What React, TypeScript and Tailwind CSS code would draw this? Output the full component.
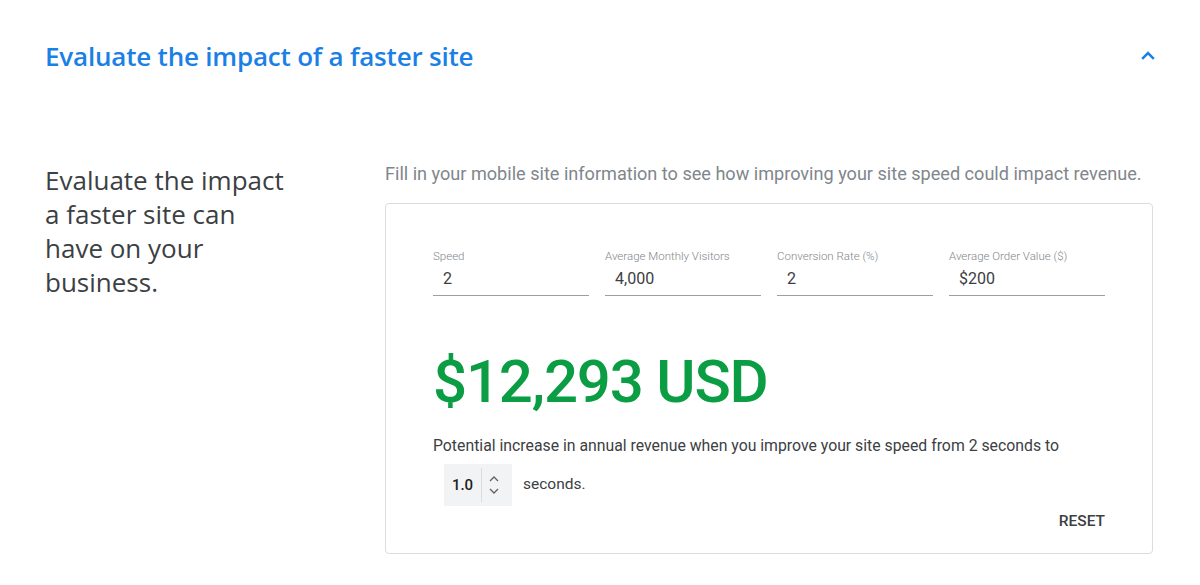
import React from 'react';

const fields = [
  { label: 'Speed', value: '2' },
  { label: 'Average Monthly Visitors', value: '4,000' },
  { label: 'Conversion Rate (%)', value: '2' },
  { label: 'Average Order Value ($)', value: '$200' },
];

const App = () => {
  return (
    <div className="w-[1200px] h-[585px] bg-white overflow-hidden font-['Open_Sans',sans-serif]">
      <header className="flex items-center justify-between h-[112px] pl-[45px] pr-[42px]">
        <h2 className="text-[26px] tracking-[-0.2px] text-[#1a80e6] font-semibold">
          Evaluate the impact of a faster site
        </h2>
        <svg width="20" height="20" viewBox="0 0 24 24" fill="none">
          <path d="M5 15.5 12 8.5l7 7" stroke="#1a80e6" strokeWidth="3" />
        </svg>
      </header>

      <div className="flex pt-[50px] pl-[45px]">
        <p className="w-[340px] text-[26px] leading-[34px] text-[#3c4043] pt-[1px]">
          Evaluate the impact
          <br />a faster site can
          <br />
          have on your
          <br />
          business.
        </p>

        <div className="w-[768px]">
          <p className="text-[18.1px] text-[#80868b] font-['Roboto',sans-serif] leading-[24px]">
            Fill in your mobile site information to see how improving your site speed could impact revenue.
          </p>

          <div className="mt-[17px] h-[351px] border border-[#dadce0] rounded-[4px] px-[47px] pt-[45px] font-['Roboto',sans-serif]">
            <div className="grid grid-cols-4 gap-4">
              {fields.map((f) => (
                <div key={f.label} className="border-b border-[#9e9e9e]">
                  <div className="text-[11.5px] font-light text-[#80868b] leading-[14px]">{f.label}</div>
                  <div className="text-[16px] text-[#3c4043] leading-[20px] pl-[10px] pt-[6px] pb-[6px]">
                    {f.value}
                  </div>
                </div>
              ))}
            </div>

            <div className="mt-[48px] text-[60px] leading-[76px] font-medium text-[#0b9d43] tracking-[-1.2px]">
              $12,293 USD
            </div>

            <p className="mt-[16px] text-[15.8px] text-[#3c4043] leading-[20px]">
              Potential increase in annual revenue when you improve your site speed from 2 seconds to
            </p>

            <div className="flex items-center mt-[8px] ml-[11px]">
              <div className="flex items-center h-[42px] w-[68px] bg-[#f1f3f4]">
                <span className="w-[37px] text-center text-[15px] font-medium text-[#202124]">1.0</span>
                <div className="h-[34px] border-l border-[#dadce0] flex flex-col items-center justify-center gap-[6px] w-[24px]">
                  <svg width="10" height="6" viewBox="0 0 10 6" fill="none">
                    <path d="M1 5 5 1l4 4" stroke="#5f6368" strokeWidth="1.3" />
                  </svg>
                  <svg width="10" height="6" viewBox="0 0 10 6" fill="none">
                    <path d="M1 1l4 4 4-4" stroke="#5f6368" strokeWidth="1.3" />
                  </svg>
                </div>
              </div>
              <span className="ml-[11px] text-[15.5px] text-[#3c4043]">seconds.</span>
            </div>

            <div className="flex justify-end mt-[4px]">
              <button className="text-[15.5px] font-medium text-[#3c4043]">RESET</button>
            </div>
          </div>
        </div>
      </div>
    </div>
  );
};

export default App;
